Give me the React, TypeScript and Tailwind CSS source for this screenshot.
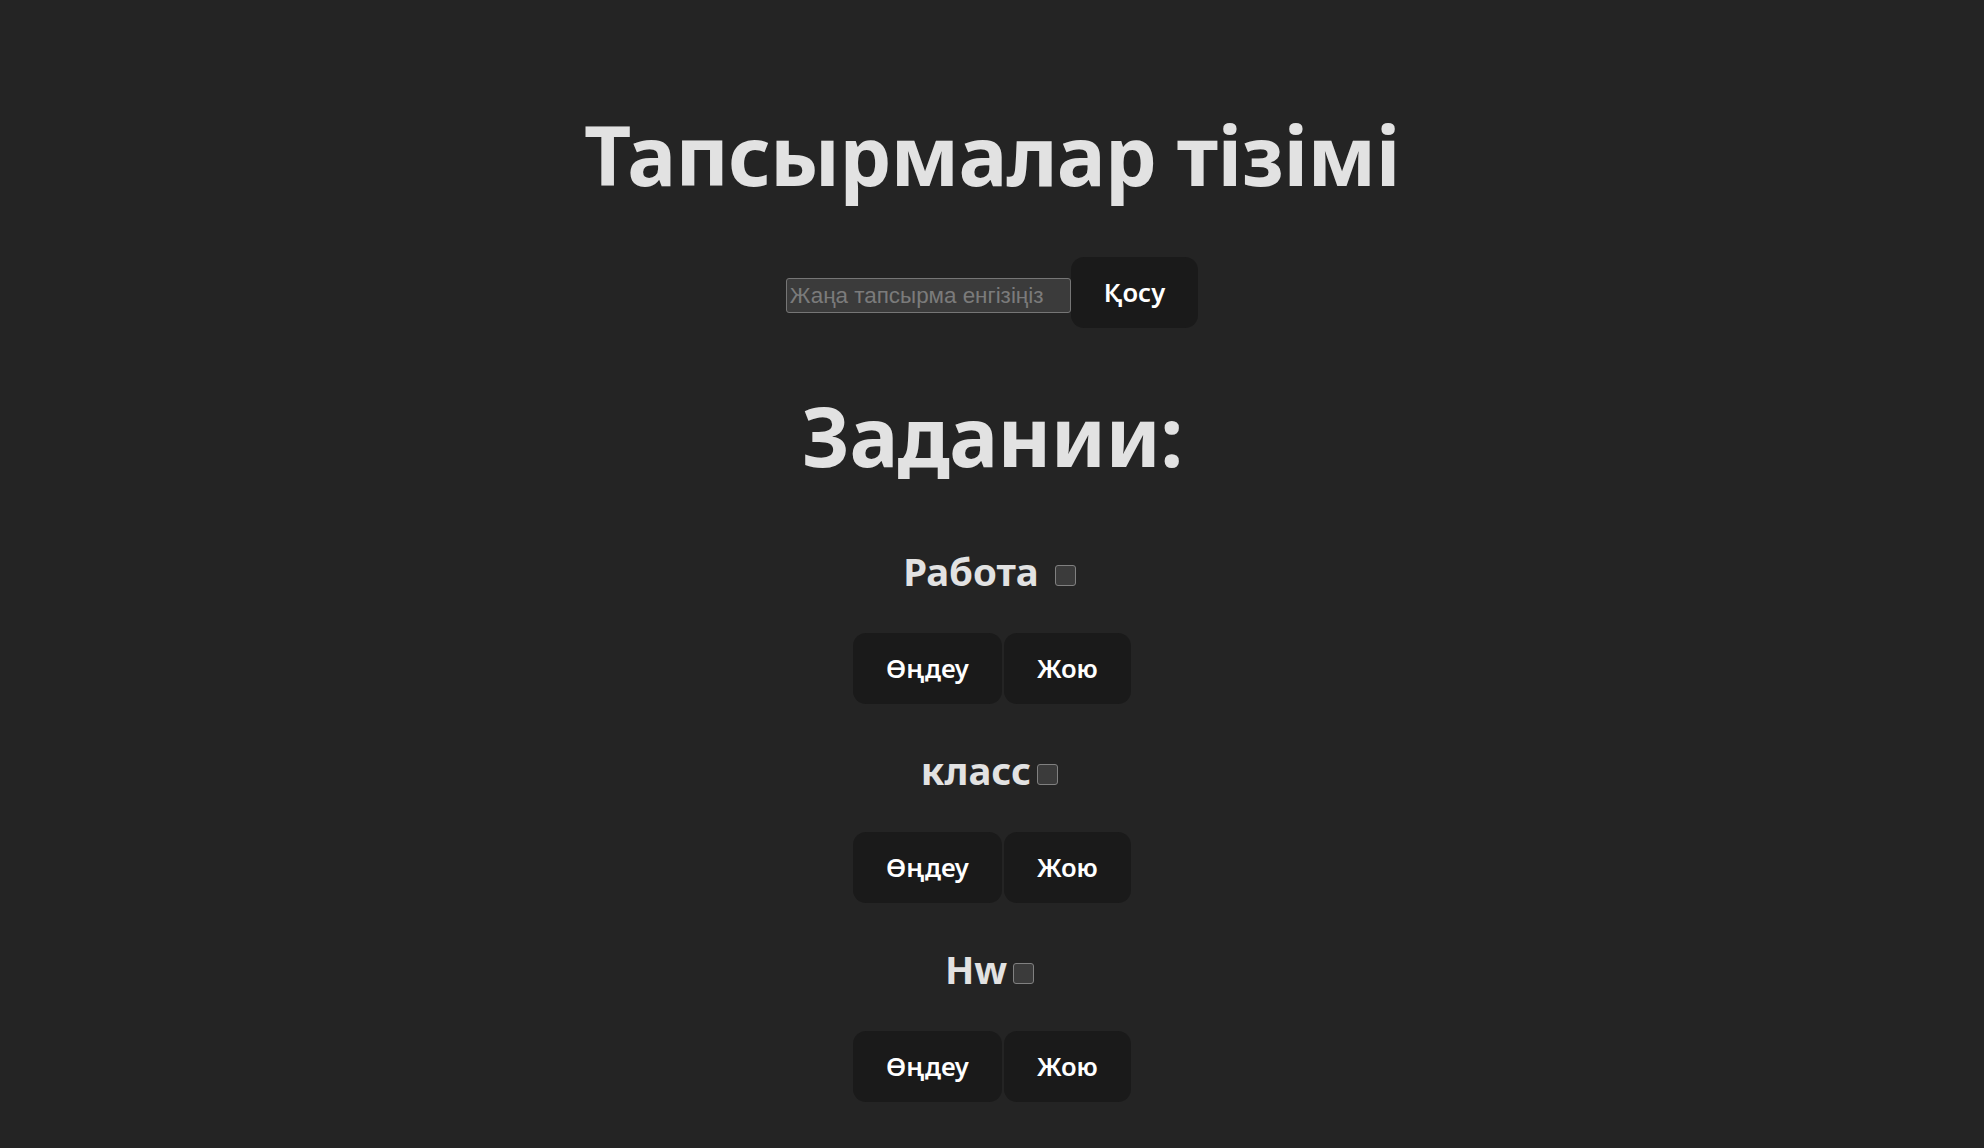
import React from 'react';

// Task list (Kazakh UI), rendered at 1.6x scale of the default Vite look.

interface Task {
  id: number;
  title: string;
}

const TASKS: Task[] = [
  { id: 1, title: 'Работа ' },
  { id: 2, title: 'класс' },
  { id: 3, title: 'Hw' },
];

function ActionButton({ children }: { children: React.ReactNode }) {
  return (
    <button
      type="button"
      className="flex h-[71px] items-center justify-center rounded-[13px] border-[1.6px] border-transparent bg-[#1a1a1a] px-[32px] text-[25.6px] font-semibold leading-[38px] text-white"
    >
      {children}
    </button>
  );
}

function Checkbox() {
  return (
    <span className="ml-[6px] mr-[5px] inline-block h-[21px] w-[21px] rounded-[3px] border-[1.6px] border-[#808080] bg-[#3b3b3b]" />
  );
}

export default function App() {
  return (
    <div
      className="flex min-h-screen w-full flex-col items-center bg-[#242424] pt-[109px] text-[#e2e2e2]"
      style={{ fontFamily: '"Noto Sans", "Open Sans", sans-serif' }}
    >
      <h1 className="text-[82px] font-bold leading-[90px] tracking-[-0.8px]">Тапсырмалар тізімі</h1>

      {/* Add form */}
      <div className="mt-[58px] flex items-start">
        <input
          type="text"
          placeholder="Жаңа тапсырма енгізіңіз"
          className="mt-[21px] h-[35px] w-[285px] rounded-[3px] border-[1.6px] border-[#767676] bg-[#3b3b3b] px-[3px] text-[22.4px] text-white outline-none placeholder:text-[#7b7b7b]"
          style={{ fontFamily: '"Liberation Sans", Arial, sans-serif' }}
        />
        <ActionButton>Қосу</ActionButton>
      </div>

      <h1 className="mt-[62px] text-[82px] font-bold leading-[90px] tracking-[-0.6px]">Задании:</h1>

      <div className="mt-[62px] flex flex-col items-center gap-[37px]">
        {TASKS.map((task) => (
          <div key={task.id} className="flex flex-col items-center">
            <h2 className="flex items-baseline whitespace-pre text-[38.4px] font-bold leading-[58px]">
              {task.title}
              <Checkbox />
            </h2>
            <div className="mt-[33px] flex gap-[2px]">
              <ActionButton>Өңдеу</ActionButton>
              <ActionButton>Жою</ActionButton>
            </div>
          </div>
        ))}
      </div>
    </div>
  );
}
